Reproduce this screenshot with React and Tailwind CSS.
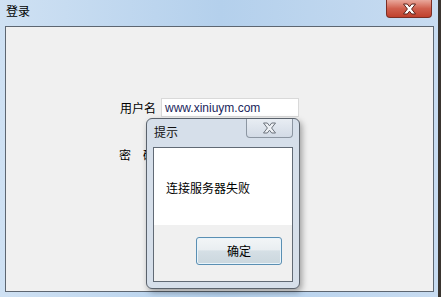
import React from "react";

function CloseGlyph({ fill, stroke }) {
  return (
    <svg width="15" height="12" viewBox="0 0 15 12">
      <path
        d="M1.5 1 H5.3 L7.5 3.8 L9.7 1 H13.5 L9.6 6 L13.5 11 H9.7 L7.5 8.2 L5.3 11 H1.5 L5.4 6 Z"
        fill={fill}
        stroke={stroke}
        strokeWidth="1"
        strokeLinejoin="round"
      />
    </svg>
  );
}

export default function App() {
  const font = { fontFamily: '"Noto Sans CJK SC", "Liberation Sans", sans-serif' };

  return (
    <div
      className="relative flex w-[441px] h-[297px] overflow-hidden bg-gradient-to-r from-[#cfe1f3] via-[#b4d0ec] to-[#c8dcf1] text-[12px] text-black"
      style={font}
    >
      {/* main window */}
      <div className="flex flex-col w-[438px] h-full">
        {/* title bar */}
        <div className="flex h-[26px] items-start">
          <div className="pl-[6px] pt-[3px] leading-[16px] text-[12px]">登录</div>
          <div className="ml-auto mr-[6px] flex h-[18px] w-[46px] items-center justify-center rounded-b-[4px] border border-t-0 border-[#7b2e24] bg-gradient-to-b from-[#e9a89c] via-[#d0604e] to-[#c0402c]">
            <CloseGlyph fill="#ffffff" stroke="#5a2018" />
          </div>
        </div>

        {/* client area */}
        <div className="ml-[5px] mr-[4px] h-[266px] border border-[#5d6671] bg-[#f0f0f0]">
          <div className="flex flex-col gap-[28px] pl-[113px] pt-[71px]">
            <div className="flex items-center">
              <span className="w-[40px] pl-[1px] leading-[16px] whitespace-nowrap">用户名</span>
              <div className="ml-[2px] flex h-[19px] w-[138px] items-center border border-[#d9d9d9] bg-white pl-[3px] text-[12px] text-[#1b1f5c]" style={{ fontFamily: '"Liberation Sans", sans-serif' }}>
                www.xiniuym.com
              </div>
            </div>
            <div className="flex items-center">
              <span className="flex w-[40px] gap-[12px] leading-[16px] whitespace-nowrap">
                <span>密</span>
                <span>码</span>
              </span>
              <div className="ml-[2px] h-[19px] w-[138px] border border-[#d9d9d9] bg-white" />
            </div>
          </div>
        </div>
      </div>

      {/* right window edge */}
      <div className="w-[3px] h-full bg-[#3a3530]" />

      {/* message box */}
      <div className="absolute left-[146px] top-[118px] flex h-[171px] w-[154px] flex-col rounded-[6px] border border-[#5a626c] bg-[#d6dfea] shadow-[2px_3px_6px_rgba(0,0,0,0.35)]">
        <div className="flex h-[28px] items-start">
          <span className="pl-[7px] pt-[5px] leading-[16px] text-[#111]">提示</span>
          <div className="ml-auto mr-[6px] flex h-[19px] w-[47px] items-center justify-center rounded-b-[4px] border border-t-0 border-[#8c96a2] bg-gradient-to-b from-[#e8edf3] to-[#d3dbe6]">
            <CloseGlyph fill="#eef1f5" stroke="#6c737c" />
          </div>
        </div>
        <div className="mx-[6px] flex h-[135px] flex-col border border-[#616a75] bg-[#f0f0f0]">
          <div className="flex h-[77px] items-center bg-white pl-[12px] pt-[2px]">连接服务器失败</div>
          <div className="flex flex-1 items-center justify-end pr-[10px] pb-[4px]">
            <button className="flex h-[28px] w-[86px] items-center justify-center rounded-[3px] border border-[#5a8fb3] bg-[linear-gradient(#f2f5f7_0%,#e9eef1_45%,#d5dfe5_50%,#cbd7de_100%)] text-[12px] shadow-[inset_0_0_0_1px_#e8f4fb]">
              确定
            </button>
          </div>
        </div>
      </div>
    </div>
  );
}
